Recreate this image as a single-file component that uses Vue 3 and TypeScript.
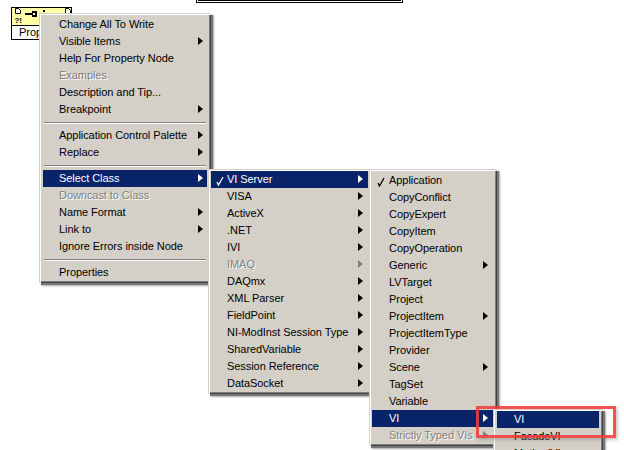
<script setup lang="ts">
interface Item {
  label?: string
  sub?: boolean
  off?: boolean
  on?: boolean
  check?: boolean
  sep?: boolean
}
const menu1: Item[] = [
  { label: 'Change All To Write' },
  { label: 'Visible Items', sub: true },
  { label: 'Help For Property Node' },
  { label: 'Examples', off: true },
  { label: 'Description and Tip...' },
  { label: 'Breakpoint', sub: true },
  { sep: true },
  { label: 'Application Control Palette', sub: true },
  { label: 'Replace', sub: true },
  { sep: true },
  { label: 'Select Class', sub: true, on: true },
  { label: 'Downcast to Class', off: true },
  { label: 'Name Format', sub: true },
  { label: 'Link to', sub: true },
  { label: 'Ignore Errors inside Node' },
  { sep: true },
  { label: 'Properties' },
]
const menu2: Item[] = [
  { label: 'VI Server', sub: true, on: true, check: true },
  { label: 'VISA', sub: true },
  { label: 'ActiveX', sub: true },
  { label: '.NET', sub: true },
  { label: 'IVI', sub: true },
  { label: 'IMAQ', sub: true, off: true },
  { label: 'DAQmx', sub: true },
  { label: 'XML Parser', sub: true },
  { label: 'FieldPoint', sub: true },
  { label: 'NI-ModInst Session Type', sub: true },
  { label: 'SharedVariable', sub: true },
  { label: 'Session Reference', sub: true },
  { label: 'DataSocket', sub: true },
]
const menu3: Item[] = [
  { label: 'Application', check: true },
  { label: 'CopyConflict' },
  { label: 'CopyExpert' },
  { label: 'CopyItem' },
  { label: 'CopyOperation' },
  { label: 'Generic', sub: true },
  { label: 'LVTarget' },
  { label: 'Project' },
  { label: 'ProjectItem', sub: true },
  { label: 'ProjectItemType' },
  { label: 'Provider' },
  { label: 'Scene', sub: true },
  { label: 'TagSet' },
  { label: 'Variable' },
  { label: 'VI', sub: true, on: true },
  { label: 'Strictly Typed VIs', sub: true, off: true },
]
const menu4: Item[] = [
  { label: 'VI', on: true },
  { label: 'FacadeVI' },
  { label: 'MethodVI' },
]
const menus = [
  { id: 'm1', items: menu1 },
  { id: 'm2', items: menu2 },
  { id: 'm3', items: menu3 },
  { id: 'm4', items: menu4 },
]
</script>

<template>
  <div class="canvas">
    <div class="topbox"></div>

    <div class="node">
      <div class="node-head">
        <svg class="node-icon" width="59" height="17" viewBox="0 0 59 17">
          <path d="M3.5 .5h3l2 2v3h-5z" fill="#fff" stroke="#000" />
          <text x="2.500" y="15" class="qm">?!</text>
          <path d="M13 5h7V3h5v6h-5V7h-7z" fill="#000" />
          <path d="M21 5h2v2h-2z" fill="#ffffa8" />
          <path d="M31 2h2v2h-2z" fill="#000" />
          <path d="M53.500 .5h3l2 2v3h-5z" fill="#fff" stroke="#000" />
        </svg>
      </div>
      <div class="node-label">Property Node</div>
    </div>

    <div v-for="m in menus" :key="m.id" class="menu" :class="m.id">
      <template v-for="(it, i) in m.items" :key="i">
        <div v-if="it.sep" class="sep"></div>
        <div v-else class="row" :class="{ on: it.on, off: it.off }">
          <svg v-if="it.check" class="check" width="8" height="10" viewBox="0 0 8 10">
            <path d="M1 6l1.500 3L7 1" fill="none" stroke="currentColor" stroke-width="1.3" />
          </svg>
          <span class="text">{{ it.label }}</span>
          <span v-if="it.sub" class="arrow"></span>
        </div>
      </template>
    </div>

    <div class="callout"></div>
  </div>
</template>

<style>
html, body { margin: 0; background: #fff; }
</style>

<style scoped>
.canvas {
  position: relative;
  width: 624px;
  height: 450px;
  overflow: hidden;
  background: #fff;
  font-family: "Liberation Sans", Arial, sans-serif;
  font-size: 11px;
  letter-spacing: -0.06px;
  color: #000;
}
.topbox {
  position: absolute;
  left: 198px;
  top: -4px;
  width: 201px;
  height: 3px;
  border: 1px solid #000;
  outline: 1px solid #fff;
  box-shadow: 0 0 0 2px #000;
}
.node {
  position: absolute;
  left: 11px;
  top: 7px;
  width: 61px;
  border: 1px solid #000;
  box-sizing: border-box;
}
.node-head {
  height: 18px;
  box-sizing: border-box;
  background: #ffffa8;
  border-bottom: 1px solid #000;
}
.node-icon { display: block; }
.qm { font: bold 8px "Liberation Sans", Arial, sans-serif; fill: #000; }
.node-label {
  height: 13px;
  line-height: 13px;
  padding-left: 7px;
  white-space: nowrap;
  overflow: hidden;
  background: #fff;
}
.menu {
  position: absolute;
  box-sizing: border-box;
  background: #d4d0c8;
  box-shadow:
    inset 1px 1px 0 #d4d0c8,
    inset 2px 2px 0 #fff,
    inset -1px -1px 0 #404040,
    inset -2px -2px 0 #808080,
    2px 2px 1px #777,
    3px 3px 2px #b8b8b8;
}
.m1 { left: 39px; top: 13px; width: 172px; padding: 3px 4px 2px; z-index: 1; }
.m2 { left: 208px; top: 169px; width: 164px; padding: 2px 4px 2px 3px; z-index: 2; }
.m3 { left: 369px; top: 169px; width: 128px; padding: 3px 4px 2px 3px; z-index: 3; }
.m4 { left: 493px; top: 409px; width: 110px; padding: 2px 4px; z-index: 4; }
.row {
  position: relative;
  display: flex;
  align-items: center;
  box-sizing: border-box;
  height: 17px;
  padding: 0 0 2px 16px;
  white-space: nowrap;
}
.m3 .row, .m4 .row { padding-left: 17px; }
.on { background: #0a246a; color: #fff; }
.off { color: #808080; }
.off .text { text-shadow: 1px 1px 0 #fff; }
.check { position: absolute; left: 5px; top: 5px; }
.arrow {
  position: absolute;
  right: 4px;
  top: 4px;
  width: 0;
  height: 0;
  border-style: solid;
  border-width: 4px 0 4px 5px;
  border-color: transparent transparent transparent #000;
}
.m2 .arrow, .m3 .arrow { right: 5px; }
.on .arrow { border-left-color: #fff; }
.off .arrow { border-left-color: #808080; }
.sep {
  height: 1px;
  margin: 4px 1px;
  background: #808080;
  box-shadow: 0 1px 0 #fff;
}
.callout {
  position: absolute;
  left: 476px;
  top: 406px;
  width: 134px;
  height: 26px;
  border: 3px solid rgba(240, 60, 60, 0.88);
  box-shadow: 2px 2px 3px rgba(120, 120, 120, 0.4);
  box-sizing: content-box;
  z-index: 5;
}
</style>
